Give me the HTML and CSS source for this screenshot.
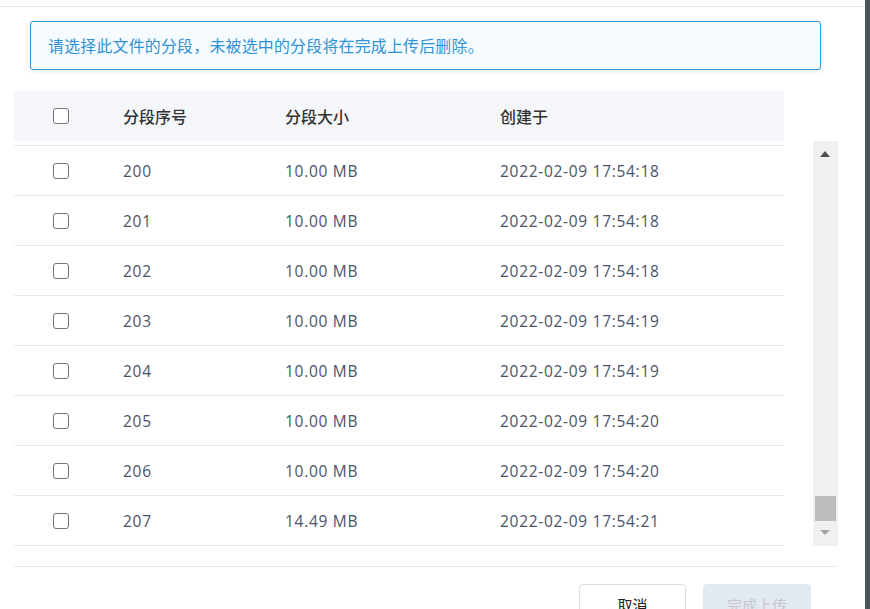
FILE: index.html
```html
<!DOCTYPE html>
<html lang="zh">
<head>
<meta charset="utf-8">
<link rel="stylesheet" href="styles.css">
</head>
<body>
<div class="page">
  <div class="modal">
    <div class="modal-top"></div>
    <div class="modal-body">
      <div class="alert">请选择此文件的分段，未被选中的分段将在完成上传后删除。</div>
      <div class="table-area">
        <div class="table">
          <div class="thead">
            <div class="cell cb"><span class="checkbox"></span></div>
            <div class="cell">分段序号</div>
            <div class="cell">分段大小</div>
            <div class="cell">创建于</div>
          </div>
          <div class="tbody">
            <div class="row-cut"></div>
            <div class="row"><div class="cell cb"><span class="checkbox"></span></div><div class="cell">200</div><div class="cell">10.00 MB</div><div class="cell">2022-02-09 17:54:18</div></div>
            <div class="row"><div class="cell cb"><span class="checkbox"></span></div><div class="cell">201</div><div class="cell">10.00 MB</div><div class="cell">2022-02-09 17:54:18</div></div>
            <div class="row"><div class="cell cb"><span class="checkbox"></span></div><div class="cell">202</div><div class="cell">10.00 MB</div><div class="cell">2022-02-09 17:54:18</div></div>
            <div class="row"><div class="cell cb"><span class="checkbox"></span></div><div class="cell">203</div><div class="cell">10.00 MB</div><div class="cell">2022-02-09 17:54:19</div></div>
            <div class="row"><div class="cell cb"><span class="checkbox"></span></div><div class="cell">204</div><div class="cell">10.00 MB</div><div class="cell">2022-02-09 17:54:19</div></div>
            <div class="row"><div class="cell cb"><span class="checkbox"></span></div><div class="cell">205</div><div class="cell">10.00 MB</div><div class="cell">2022-02-09 17:54:20</div></div>
            <div class="row"><div class="cell cb"><span class="checkbox"></span></div><div class="cell">206</div><div class="cell">10.00 MB</div><div class="cell">2022-02-09 17:54:20</div></div>
            <div class="row"><div class="cell cb"><span class="checkbox"></span></div><div class="cell">207</div><div class="cell">14.49 MB</div><div class="cell">2022-02-09 17:54:21</div></div>
          </div>
        </div>
        <div class="scrollbar">
          <div class="arrow-up"></div>
          <div class="thumb"></div>
          <div class="arrow-down"></div>
        </div>
      </div>
    </div>
    <div class="modal-footer">
      <button class="btn btn-cancel">取消</button>
      <button class="btn btn-ok">完成上传</button>
    </div>
  </div>
  <div class="strip"></div>
</div>
</body>
</html>
```

FILE: styles.css
```css
* { box-sizing: border-box; }
html, body { margin: 0; padding: 0; background: #fff; }
body {
  font-family: "Open Sans", "Noto Sans CJK SC", sans-serif;
  color: #515a6e;
  overflow: hidden;
}
.page {
  display: flex;
  width: 870px;
  height: 609px;
  overflow: hidden;
}
.modal {
  width: 865px;
  display: flex;
  flex-direction: column;
}
.strip {
  width: 5px;
  background: #4a535b;
}
.modal-top {
  height: 7px;
  border-bottom: 1px solid #e8eaec;
  flex: none;
}
.modal-body {
  padding: 14px 0 0 14px;
}
.alert {
  margin-left: 16px;
  width: 791px;
  height: 49px;
  border: 1px solid #3096d8;
  border-radius: 3px;
  background: #f5fbff;
  box-shadow: 0 2px 5px rgba(0, 0, 0, 0.08);
  color: #2f93d6;
  font-family: "Noto Sans CJK SC", sans-serif;
  font-size: 15.9px;
  line-height: 47px;
  padding-left: 17px;
  letter-spacing: 0.25px;
}
.table-area {
  margin-top: 21px;
  display: flex;
  align-items: flex-start;
}
.table {
  width: 770px;
}
.thead, .row {
  display: grid;
  grid-template-columns: 109px 162px 215px 1fr;
  align-items: center;
}
.thead {
  height: 50px;
  background: #f5f6f9;
  color: #333;
  font-family: "Noto Sans CJK SC", sans-serif;
  font-weight: 500;
  font-size: 16px;
}
.row-cut {
  height: 5px;
  border-bottom: 1px solid #e8eaec;
}
.row {
  height: 50px;
  border-bottom: 1px solid #e8eaec;
  font-size: 15.5px;
  letter-spacing: 0.7px;
  color: #4b5366;
  padding-top: 1px;
}
.cell.cb {
  padding-left: 39px;
  display: flex;
  align-items: center;
}
.checkbox {
  display: block;
  width: 16px;
  height: 16px;
  border: 1.5px solid #737373;
  border-radius: 3px;
  background: #fff;
}
.scrollbar {
  margin-left: 29px;
  margin-top: 50px;
  width: 25px;
  height: 405px;
  background: #f0f0f0;
  position: relative;
}
.arrow-up {
  position: absolute;
  left: 7px;
  top: 10px;
  width: 0;
  height: 0;
  border-left: 5.5px solid transparent;
  border-right: 5.5px solid transparent;
  border-bottom: 6px solid #505050;
}
.thumb {
  position: absolute;
  left: 2px;
  top: 355px;
  width: 21px;
  height: 25px;
  background: #bdbdbd;
}
.arrow-down {
  position: absolute;
  left: 7px;
  top: 389px;
  width: 0;
  height: 0;
  border-left: 5.5px solid transparent;
  border-right: 5.5px solid transparent;
  border-top: 5px solid #a3a3a3;
}
.modal-footer {
  margin-top: 20px;
  margin-left: 14px;
  width: 824px;
  border-top: 1px solid #e8eaec;
  padding-top: 17px;
  display: flex;
  justify-content: flex-end;
  gap: 17px;
  padding-right: 27px;
}
.btn {
  height: 40px;
  border-radius: 4px;
  font-family: "Noto Sans CJK SC", sans-serif;
  font-size: 15px;
  padding: 0;
}
.btn-cancel {
  width: 107px;
  background: #fff;
  border: 1px solid #dcdee2;
  color: #222;
}
.btn-ok {
  width: 108px;
  background: #e3e9f0;
  border: 1px solid #e3e9f0;
  color: #c5c8ce;
}
```
